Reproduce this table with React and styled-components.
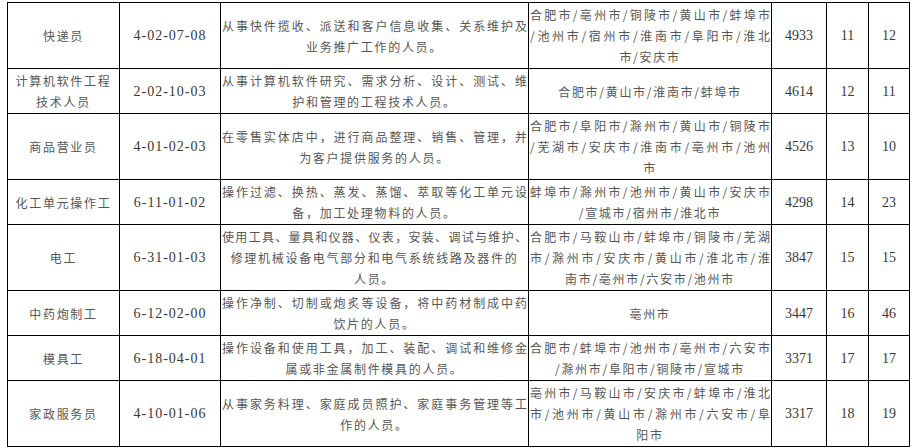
import React from "react";
import styled, { createGlobalStyle } from "styled-components";

const GlobalStyle = createGlobalStyle`
  body {
    margin: 0;
    background: #fff;
  }
`;

const Page = styled.div`
  padding: 2px 0 0 7px;
`;

const Table = styled.table`
  border-collapse: collapse;
  table-layout: fixed;
  width: 902px;
`;

const Col = styled.col`
  width: ${(p) => p.$w}px;
`;

const Cell = styled.td`
  border: 1px solid #000;
  padding: 1px 1px;
  vertical-align: middle;
  text-align: center;
  font-family: "Noto Sans CJK SC", "Liberation Serif", serif;
  font-size: 12px;
  line-height: 21px;
  color: #565656;
`;

const NumCell = styled(Cell)`
  font-family: "Liberation Serif", serif;
  font-size: 14px;
  color: #383838;
  letter-spacing: ${(p) => (p.$code ? "1px" : "0")};
`;

const Line = styled.span`
  display: block;
  text-align: ${(p) => (p.$full ? "justify" : "center")};
  text-align-last: ${(p) => (p.$full ? "justify" : "center")};
  letter-spacing: ${(p) => (p.$full ? "0" : "1.7px")};
`;

const rows = [
  {
    name: ["快递员"],
    code: "4-02-07-08",
    desc: ["从事快件揽收、派送和客户信息收集、关系维护及", "业务推广工作的人员。"],
    places: ["合肥市/亳州市/铜陵市/黄山市/蚌埠市", "/池州市/宿州市/淮南市/阜阳市/淮北", "市/安庆市"],
    total: 4933,
    a: 11,
    b: 12,
  },
  {
    name: ["计算机软件工程", "技术人员"],
    code: "2-02-10-03",
    desc: ["从事计算机软件研究、需求分析、设计、测试、维", "护和管理的工程技术人员。"],
    places: ["合肥市/黄山市/淮南市/蚌埠市"],
    total: 4614,
    a: 12,
    b: 11,
  },
  {
    name: ["商品营业员"],
    code: "4-01-02-03",
    desc: ["在零售实体店中，进行商品整理、销售、管理，并", "为客户提供服务的人员。"],
    places: ["合肥市/阜阳市/滁州市/黄山市/铜陵市", "/芜湖市/安庆市/淮南市/亳州市/池州", "市"],
    total: 4526,
    a: 13,
    b: 10,
  },
  {
    name: ["化工单元操作工"],
    code: "6-11-01-02",
    desc: ["操作过滤、换热、蒸发、蒸馏、萃取等化工单元设", "备，加工处理物料的人员。"],
    places: ["蚌埠市/滁州市/池州市/黄山市/安庆市", "/宣城市/宿州市/淮北市"],
    total: 4298,
    a: 14,
    b: 23,
  },
  {
    name: ["电工"],
    code: "6-31-01-03",
    desc: [
      "使用工具、量具和仪器、仪表，安装、调试与维护、",
      { text: "修理机械设备电气部分和电气系统线路及器件的", center: true },
      "人员。",
    ],
    places: ["合肥市/马鞍山市/蚌埠市/铜陵市/芜湖", "市/滁州市/安庆市/黄山市/淮北市/淮", "南市/亳州市/六安市/池州市"],
    total: 3847,
    a: 15,
    b: 15,
  },
  {
    name: ["中药炮制工"],
    code: "6-12-02-00",
    desc: ["操作净制、切制或炮炙等设备，将中药材制成中药", "饮片的人员。"],
    places: ["亳州市"],
    total: 3447,
    a: 16,
    b: 46,
  },
  {
    name: ["模具工"],
    code: "6-18-04-01",
    desc: ["操作设备和使用工具，加工、装配、调试和维修金", "属或非金属制件模具的人员。"],
    places: ["合肥市/蚌埠市/池州市/亳州市/六安市", "/滁州市/阜阳市/铜陵市/宣城市"],
    total: 3371,
    a: 17,
    b: 17,
  },
  {
    name: ["家政服务员"],
    code: "4-10-01-06",
    desc: ["从事家务料理、家庭成员照护、家庭事务管理等工", "作的人员。"],
    places: ["亳州市/马鞍山市/安庆市/蚌埠市/淮北", "市/池州市/黄山市/滁州市/六安市/阜", "阳市"],
    total: 3317,
    a: 18,
    b: 19,
  },
];

// non-last lines are spread to the cell width, like the source document
const Lines = ({ lines, justify = true }) =>
  lines.map((l, i) => {
    const text = typeof l === "string" ? l : l.text;
    const full = justify && i < lines.length - 1 && !l.center;
    return (
      <Line key={i} $full={full}>
        {text}
      </Line>
    );
  });

const App = () => {
  return (
    <Page>
      <GlobalStyle />
      <Table>
        <colgroup>
          {[112, 101, 308, 243, 55, 42, 41].map((w, i) => (
            <Col key={i} $w={w} />
          ))}
        </colgroup>
        <tbody>
          {rows.map((r) => (
            <tr key={r.code}>
              <Cell>
                <Lines lines={r.name} justify={false} />
              </Cell>
              <NumCell $code>{r.code}</NumCell>
              <Cell>
                <Lines lines={r.desc} />
              </Cell>
              <Cell>
                <Lines lines={r.places} />
              </Cell>
              <NumCell>{r.total}</NumCell>
              <NumCell>{r.a}</NumCell>
              <NumCell>{r.b}</NumCell>
            </tr>
          ))}
        </tbody>
      </Table>
    </Page>
  );
};

export default App;
